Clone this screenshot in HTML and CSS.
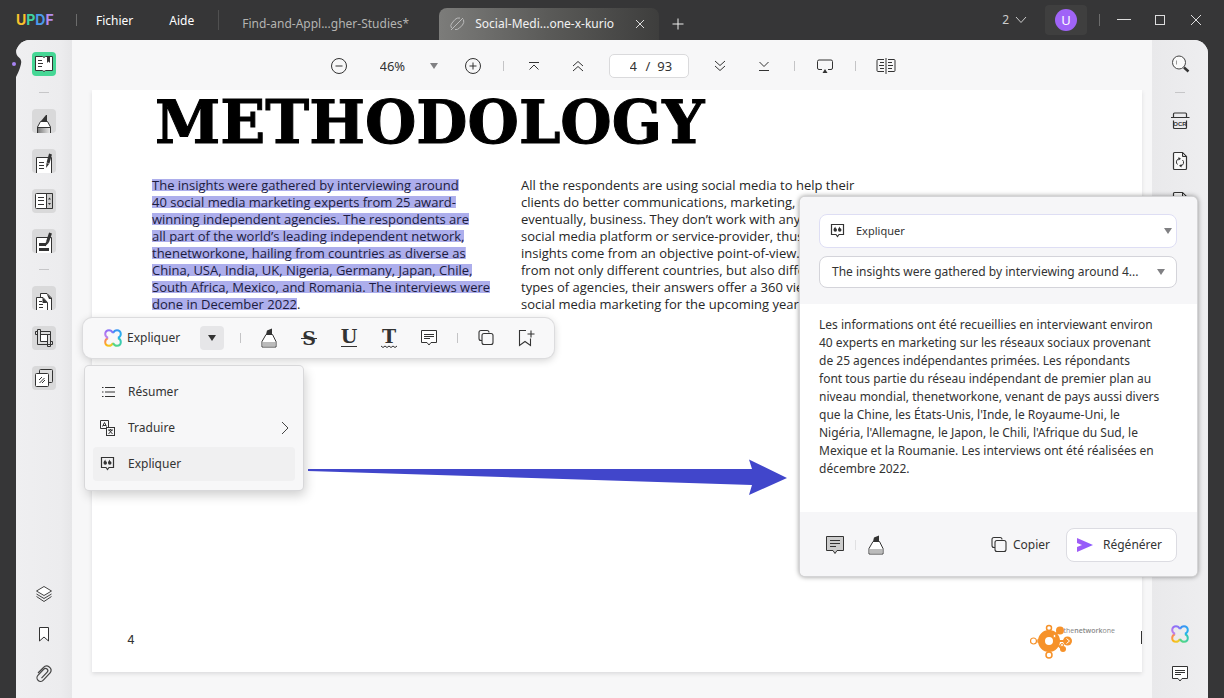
FILE: index.html
```html
<!DOCTYPE html>
<html lang="fr">
<head>
<meta charset="utf-8">
<meta name="viewport" content="width=device-width, initial-scale=1">
<title>UPDF</title>
<link rel="stylesheet" href="styles.css">
</head>
<body>
<svg class="sprite" aria-hidden="true">
  <defs>
    <linearGradient id="g-tl" x1="0" y1="1" x2="1" y2="0"><stop offset="0" stop-color="#c98be8"/><stop offset=".5" stop-color="#9a6bf5"/><stop offset="1" stop-color="#7c7cf8"/></linearGradient>
    <linearGradient id="g-tr" x1="0" y1="0" x2="1" y2="1"><stop offset="0" stop-color="#3c8cf5"/><stop offset="1" stop-color="#27b7ee"/></linearGradient>
    <linearGradient id="g-br" x1="1" y1="0" x2="0" y2="1"><stop offset="0" stop-color="#2cc6c4"/><stop offset="1" stop-color="#5bd97c"/></linearGradient>
    <linearGradient id="g-bl" x1="1" y1="1" x2="0" y2="0"><stop offset="0" stop-color="#e6d233"/><stop offset=".5" stop-color="#fdb515"/><stop offset="1" stop-color="#f7777a"/></linearGradient>
    <linearGradient id="g-pen" x1="0" x2="1"><stop offset="0" stop-color="#777"/><stop offset="1" stop-color="#eee"/></linearGradient>
    <linearGradient id="g-send" x1="0" x2="1"><stop offset="0" stop-color="#a05cf5"/><stop offset="1" stop-color="#8b5cff"/></linearGradient>
  </defs>
  <symbol id="clover" viewBox="0 0 18 18"><g fill="none" stroke-width="2"><path stroke="url(#g-bl)" d="M4 9C2 10 1.200 11.500 1.200 13 1.200 15.200 2.800 16.800 5 16.800 6.500 16.800 8 16 9 14"/><path stroke="url(#g-br)" d="M9 14C10 16 11.500 16.800 13 16.800 15.200 16.800 16.800 15.200 16.800 13 16.800 11.500 16 10 14 9"/><path stroke="url(#g-tr)" d="M14 9C16 8 16.800 6.500 16.800 5 16.800 2.800 15.200 1.200 13 1.200 11.500 1.200 10 2 9 4"/><path stroke="url(#g-tl)" d="M9 4C8 2 6.500 1.200 5 1.200 2.800 1.200 1.200 2.800 1.200 5 1.200 6.500 2 8 4 9"/></g></symbol>
  <symbol id="reader" viewBox="0 0 24 24"><path fill="#fff" stroke="#333" d="M3.500 4.500h7l1.500 1 1.500-1h7v14h-7l-1.500 1-1.500-1h-7z"/><path stroke="#333" fill="none" d="M6 8.500h4M6 11.500h5M6 14.500h4"/><path fill="#333" d="M15 5h3v6l-1.500-1.500L15 11z"/></symbol>
  <symbol id="marker-tile" viewBox="0 0 24 24"><path fill="#333" d="M9 12l5-6h1v6z"/><path fill="#fff" stroke="#333" d="M8.500 12.500h7l3 5.500v6.500h-13v-6.500z"/><path fill="url(#g-pen)" stroke="#333" d="M5.500 18.500h13v6h-13z"/></symbol>
  <symbol id="note-tile" viewBox="0 0 24 24"><path fill="#fff" stroke="#333" d="M4.500 25v-16.500h15v16.500"/><path stroke="#333" d="M7 13.500h5M7 16.500h5M7 19.500h5"/><path stroke="#333" stroke-width="3" d="M18.500 5l-2.500 9"/><path fill="#333" d="M14.500 14l2.800.8-3.300 4.200z"/></symbol>
  <symbol id="form-tile" viewBox="0 0 24 24"><rect x="3.500" y="4.500" width="17" height="15" rx="1" fill="#fff" stroke="#333"/><path fill="#ccc" stroke="#333" d="M14.500 4.500h6v15h-6z"/><path stroke="#333" d="M6 8.500h6M6 11.500h6M6 15.500h6"/><path fill="#333" d="M16 10.500l1.500-2 1.500 2zM16 14l1.500 2 1.500-2z"/></symbol>
  <symbol id="redact-tile" viewBox="0 0 24 24"><path fill="#fff" stroke="#333" d="M4.500 25v-16.500h15v16.500"/><path stroke="#333" stroke-width="3" d="M7 15.500h7M7 20.500h10"/><path stroke="#333" stroke-width="3" d="M18.500 4l-3 9"/><path fill="#333" d="M14 12.500l3 1-4 4z"/></symbol>
  <symbol id="pages-tile" viewBox="0 0 24 24"><path fill="#fff" stroke="#333" d="M8.500 25v-17.500h6.500l4.500 4.500v13"/><path fill="#333" d="M14.500 7.500l5.500 5.500h-3z"/><path fill="#fff" stroke="#333" d="M4.500 25v-13.500h6.500l4.500 5v8.500"/><path fill="#333" d="M10.500 11.500l5 5.500h-5z"/><path stroke="#333" d="M7 15.500h3M7 18.500h4M7 21.500h4"/></symbol>
  <symbol id="crop-tile" viewBox="0 0 24 24"><path fill="#fff" d="M8 8h9v9H8z"/><path fill="#ddd" stroke="#333" d="M3.500 5.500h15v9h-3v-6h-12zM5.500 3.500h3v12h12v3h-15zM15.500 8.500h3v12h-3z"/><path fill="#ddd" d="M6 4h2v14h-2zM16 9h2v7h-2z"/></symbol>
  <symbol id="stack-tile" viewBox="0 0 24 24"><rect x="7.500" y="3.500" width="13" height="13" rx="1" fill="#ddd" stroke="#333"/><rect x="3.500" y="7.500" width="13" height="13" rx="1" fill="#fff" stroke="#333"/><path stroke="#333" fill="none" d="M7 14l3-3M10 17l3-3M7.500 17l5-5"/></symbol>
  <symbol id="layers" viewBox="0 0 24 24"><path fill="#fff" stroke="#444" d="M12 4.500l7.500 4.500-7.500 4.500-7.500-4.500z"/><path fill="none" stroke="#444" d="M4.500 12l7.500 4.500 7.500-4.500M4.500 14.500l7.500 5 7.500-5"/></symbol>
  <symbol id="bookmark" viewBox="0 0 24 24"><path fill="#fff" stroke="#333" d="M7.500 5.500h9v13.500l-4.500-4-4.500 4z"/></symbol>
  <symbol id="clip" viewBox="0 0 24 24"><path fill="none" stroke="#444" stroke-width="1.200" d="M6 11l5.500-5.500a4.300 4.300 0 0 1 6.800 5.200l-7 7.500a3.600 3.600 0 0 1-5.400-4.800l6-6.200a2.200 2.200 0 0 1 3.300 3l-5.700 6"/></symbol>
  <symbol id="search" viewBox="0 0 24 24"><circle cx="11" cy="10.500" r="6.500" fill="#fafafa" stroke="#444"/><path fill="none" stroke="#999" d="M8.500 8.500v4"/><path stroke="#333" stroke-width="2.400" d="M16 15.500l4.500 4"/></symbol>
  <symbol id="convert" viewBox="0 0 24 24"><path fill="#f8f8f8" stroke="#333" stroke-width="1.200" d="M14.500 3.500H6.500q-1 0-1 1v15q0 1 1 1h11q1 0 1-1V7.500z"/><path fill="#ccc" stroke="#333" d="M14.500 3.500v4h4z"/><path fill="none" stroke="#333" d="M9.500 15.500a3.400 3.400 0 0 1 1.500-5.800M14.500 11a3.400 3.400 0 0 1-1.500 5.800"/><path fill="#333" d="M10.500 8l2.500 1.700-2.500 1.800zM13.500 15l-2.500 1.700 2.500 1.800z"/></symbol>
  <symbol id="comment" viewBox="0 0 24 24"><path class="fillable" stroke="#333" d="M4.500 4.500h15v12h-5.500l-2 2.500-2-2.500h-5.500z"/><path stroke="#333" d="M7 8.500h10M7 10.500h10M7 12.500h6"/></symbol>
  <symbol id="comment-large" viewBox="0 0 24 24"><path fill="#ccc" stroke="#333" d="M3.500 3.500h17v14h-6.500l-2 3-2-3h-6.500z"/><path stroke="#333" d="M7 7.500h10M7 10.500h10M7 13.500h6"/></symbol>
  <symbol id="marker" viewBox="0 0 24 24"><path fill="#333" d="M9 8.500l1-4 5-2v6z"/><path fill="#fff" stroke="#333" d="M9 8.500h6.500l3.500 7v5.500h-14v-5.500z"/><path fill="#bbb" d="M5.500 16h13v4.500h-13z"/></symbol>
  <symbol id="copy" viewBox="0 0 24 24"><path fill="none" stroke="#333" stroke-width="1.100" d="M8 14.500H7q-2 0-2-2v-6q0-2 2-2h6q2 0 2 2"/><rect x="8" y="7.500" width="11" height="11" rx="2" fill="none" stroke="#333" stroke-width="1.100"/></symbol>
  <symbol id="bookmark-add" viewBox="0 0 24 24"><path fill="none" stroke="#333" stroke-width="1.100" d="M12 4.500H5.500v15l5.500-4 5.500 4v-7M17 4.500v7M13.500 8h7"/></symbol>
  <symbol id="quote" viewBox="0 0 24 24"><path fill="none" stroke="#333" stroke-width="1.200" d="M5.500 5.500h12v10h-4.500l-1.500 2-1.500-2h-4.500z"/><path fill="#333" d="M7.500 10.500q0-1 2-3v1.500q1.500.5 1.500 2a1.700 1.700 0 0 1-3.500 0zM12 10.500q0-1 2-3v1.500q1.500.5 1.500 2a1.700 1.700 0 0 1-3.500 0z"/></symbol>
  <symbol id="list" viewBox="0 0 24 24"><path stroke="#333" d="M9 7.500h10M9 12h10M9 16.500h10"/><path stroke="#333" d="M6 7.500h1.500M6 12h1.500M6 16.500h1.500"/></symbol>
  <symbol id="translate" viewBox="0 0 24 24"><path fill="none" stroke="#333" d="M10.500 12.500h-6v-8h8v7"/><rect x="10.500" y="11.500" width="8" height="8" fill="none" stroke="#333"/><path fill="none" stroke="#333" d="M6.500 10.500l2-4 2 4M7 9.500h3M12 14h5M14.500 13v1M12.500 18l3.500-4M13 14l3.500 4"/></symbol>
  <symbol id="caret" viewBox="0 0 8 6"><path fill="currentColor" d="M0 0h8L4 6z"/></symbol>
</svg>

<header class="titlebar">
  <strong class="brand"><span class="u">U</span><span class="p">P</span><span class="d">D</span><span class="f">F</span></strong>
  <span class="bar"></span>
  <nav class="menubar"><button>Fichier</button><button>Aide</button></nav>
  <span class="bar bar-tall"></span>
  <div class="tabs">
    <button class="tab">Find-and-Appl...gher-Studies*</button>
    <div class="tab tab-active">
      <svg width="16" height="14" viewBox="0 0 16 14" fill="none" stroke="#bbb"><path d="M2.500 11a4 4 0 0 1 .5-5l3-3.500q2-2 5-1.500M6 12.500q2.500.5 4.500-1.500l3-3q2-2.500 1-5.500M2 13L14 1"/></svg>
      <span class="tab-name">Social-Medi...one-x-kurio</span>
      <button aria-label="Fermer l'onglet"><svg width="10" height="10" viewBox="0 0 10 10" stroke="#ddd"><path d="M1 1l8 8M9 1l-8 8"/></svg></button>
    </div>
    <button class="new-tab" aria-label="Nouvel onglet"><svg width="12" height="12" viewBox="0 0 12 12" stroke="#eee"><path d="M6 .5v11M.5 6h11"/></svg></button>
  </div>
  <div class="window-tools">
    <button class="count">2 <svg width="12" height="8" viewBox="0 0 12 8" fill="none" stroke="#ccc"><path d="M1 1l5 5.500L11 1"/></svg></button>
    <button class="account"><span class="avatar">U</span></button>
    <span class="bar"></span>
    <button class="win" aria-label="Réduire"><svg width="14" height="14" viewBox="0 0 14 14" stroke="#ddd"><path d="M0 6.500h14"/></svg></button>
    <button class="win" aria-label="Agrandir"><svg width="12" height="12" viewBox="0 0 12 12" fill="none" stroke="#ddd"><rect x="1.500" y="1.500" width="9" height="9"/></svg></button>
    <button class="win" aria-label="Fermer"><svg width="12" height="12" viewBox="0 0 12 12" stroke="#ddd"><path d="M1 1l10 10M11 1L1 11"/></svg></button>
  </div>
</header>

<div class="workspace">
  <aside class="rail rail-left">
    <svg class="notch" width="10" height="26" viewBox="0 0 10 26"><path fill="#363637" d="M0 0h4q0 4 3 6.500t2 6.500-2 6.500-3 6.500H0z"/><circle cx="2" cy="13" r="2" fill="#a884f3"/></svg>
    <button class="tool tool-on" aria-label="Lecteur"><svg><use href="#reader"/></svg></button>
    <hr>
    <button class="tool tile" aria-label="Commenter"><svg><use href="#marker-tile"/></svg></button>
    <button class="tool tile" aria-label="Modifier"><svg><use href="#note-tile"/></svg></button>
    <button class="tool tile" aria-label="Formulaire"><svg><use href="#form-tile"/></svg></button>
    <button class="tool tile" aria-label="Caviarder"><svg><use href="#redact-tile"/></svg></button>
    <hr>
    <button class="tool tile" aria-label="Organiser les pages"><svg><use href="#pages-tile"/></svg></button>
    <button class="tool tile" aria-label="Recadrer"><svg><use href="#crop-tile"/></svg></button>
    <button class="tool tile" aria-label="Filigrane"><svg><use href="#stack-tile"/></svg></button>
    <button class="tool push" aria-label="Calques"><svg><use href="#layers"/></svg></button>
    <button class="tool" aria-label="Signets"><svg><use href="#bookmark"/></svg></button>
    <button class="tool" aria-label="Pièces jointes"><svg><use href="#clip"/></svg></button>
  </aside>

  <main class="viewer">
    <div class="toolbar">
      <button class="tbtn" aria-label="Zoom arrière"><svg width="18" height="18" viewBox="0 0 18 18" fill="none" stroke="#333"><circle cx="9" cy="9" r="7.500"/><path d="M5.500 9h7"/></svg></button>
      <label class="zoom"><select aria-label="Zoom"><option>46%</option></select><svg class="caret" width="8" height="6"><use href="#caret"/></svg></label>
      <button class="tbtn" aria-label="Zoom avant"><svg width="18" height="18" viewBox="0 0 18 18" fill="none" stroke="#333"><circle cx="9" cy="9" r="7.500"/><path d="M5.500 9h7M9 5.500v7"/></svg></button>
      <span class="sep"></span>
      <button class="tbtn" aria-label="Première page"><svg width="12" height="12" viewBox="0 0 12 12" fill="none" stroke="#333"><path d="M1 2.500h10M1.500 9.500L6 5l4.500 4.500"/></svg></button>
      <button class="tbtn" aria-label="Page précédente"><svg width="12" height="12" viewBox="0 0 12 12" fill="none" stroke="#333"><path d="M1 6l5-4.500L11 6M1 11l5-4.500 5 4.500"/></svg></button>
      <label class="pager"><input aria-label="Page" value="4"><span>/</span><span>93</span></label>
      <button class="tbtn" aria-label="Page suivante"><svg width="12" height="12" viewBox="0 0 12 12" fill="none" stroke="#333"><path d="M1 1l5 4.500L11 1M1 6l5 4.500L11 6"/></svg></button>
      <button class="tbtn" aria-label="Dernière page"><svg width="12" height="12" viewBox="0 0 12 12" fill="none" stroke="#333"><path d="M1 10.500h10M1.500 2L6 6.500 10.500 2"/></svg></button>
      <span class="sep"></span>
      <button class="tbtn" aria-label="Diaporama"><svg width="18" height="14" viewBox="0 0 18 14"><path fill="none" stroke="#333" d="M6 10.500H3q-1.500 0-1.500-1.500V2.500Q1.500 1 3 1h12q1.500 0 1.500 1.500V9q0 1.500-1.500 1.500h-3"/><path fill="#333" d="M6.500 14L9 10l2.500 4z"/></svg></button>
      <span class="sep"></span>
      <button class="tbtn" aria-label="Affichage"><svg width="20" height="18" viewBox="0 0 20 18" fill="none" stroke="#333"><path d="M8 2.500H2q-1 0-1 1v10q0 1 1 1h6M12 2.500h6q1 0 1 1v10q0 1-1 1h-6M10 1v16M4 5.500h4M3 8.500h5M4 11.500h4M12 5.500h4M12 8.500h5M12 11.500h4"/></svg></button>
    </div>

    <article class="page">
      <h1>METHODOLOGY</h1>
      <div class="columns">
        <p><mark>The insights were gathered by interviewing around</mark><br><mark>40 social media marketing experts from 25 award-</mark><br><mark>winning independent agencies. The respondents are</mark><br><mark>all part of the world’s leading independent network,</mark><br><mark>thenetworkone, hailing from countries as diverse as</mark><br><mark>China, USA, India, UK, Nigeria, Germany, Japan, Chile,</mark><br><mark>South Africa, Mexico, and Romania. The interviews were</mark><br><mark class="end">done in December 2022</mark>.</p>
        <p>All the respondents are using social media to help their<br>clients do better communications, marketing, and<br>eventually, business. They don’t work with any particular<br>social media platform or service-provider, thus their<br>insights come from an objective point-of-view. Coming<br>from not only different countries, but also different<br>types of agencies, their answers offer a 360 view on<br>social media marketing for the upcoming year.</p>
      </div>
      <footer class="page-foot">
        <span>4</span>
        <div class="sponsor">
          <svg width="44" height="36" viewBox="0 0 44 36" fill="none" stroke="#f6922a"><circle cx="19" cy="17" r="7.500" stroke-width="7"/><circle cx="19" cy="4" r="2.500" stroke-width="1.500"/><circle cx="19" cy="31" r="3" stroke-width="1.500"/><circle cx="3.500" cy="17" r="3" stroke-width="1.200"/><circle cx="8.500" cy="17" r="1.500"/><circle cx="30" cy="6.500" r="4" fill="#f6922a" stroke="none"/><path d="M24 12l4-4M26 17h8M27 20l5 5" stroke-width="2"/><circle cx="37.500" cy="17" r="4.500" fill="#f6922a" stroke="none"/><path stroke="#fff" d="M36.500 14.500l3 2.500-3 2.500"/><circle cx="33" cy="25" r="3" fill="#f6922a" stroke="none"/><circle cx="24.500" cy="12" r="1.500" fill="#fff"/><circle cx="32" cy="21" r="1.500" fill="#fff"/></svg>
          <small>the<b>network</b>one</small>
        </div>
      </footer>
      <span class="caret-mark"></span>

      <div class="popbar">
        <button class="ai"><svg width="18" height="18"><use href="#clover"/></svg>Expliquer</button>
        <button class="drop" aria-label="Plus d'actions"><svg width="8" height="6"><use href="#caret"/></svg></button>
        <span class="sep"></span>
        <button class="pbtn" aria-label="Surligner"><svg><use href="#marker"/></svg></button>
        <button class="pbtn" aria-label="Barrer"><svg viewBox="0 0 24 24"><text x="12" y="19" class="glyph">S</text><path stroke="#333" d="M4 12.500h16"/></svg></button>
        <button class="pbtn" aria-label="Souligner"><svg viewBox="0 0 24 24"><text x="12" y="17" class="glyph">U</text><path stroke="#333" d="M4 20.500h16"/></svg></button>
        <button class="pbtn" aria-label="Souligner en vague"><svg viewBox="0 0 24 24"><text x="12" y="17" class="glyph">T</text><path stroke="#333" fill="none" d="M4 20l2 1.500 2-1.500 2 1.500 2-1.500 2 1.500 2-1.500 2 1.500 2-1.500"/></svg></button>
        <button class="pbtn" aria-label="Commentaire"><svg><use href="#comment"/></svg></button>
        <span class="sep"></span>
        <button class="pbtn" aria-label="Copier"><svg><use href="#copy"/></svg></button>
        <button class="pbtn" aria-label="Ajouter un signet"><svg><use href="#bookmark-add"/></svg></button>
      </div>

      <div class="popmenu">
        <button><svg><use href="#list"/></svg>Résumer</button>
        <button><svg><use href="#translate"/></svg>Traduire<svg class="more" viewBox="0 0 8 14" fill="none" stroke="#444"><path d="M1 1l6 6-6 6"/></svg></button>
        <button class="current"><svg><use href="#quote"/></svg>Expliquer</button>
      </div>

      <svg class="arrow" width="480" height="38" viewBox="0 0 480 38"><path fill="#4146cb" d="M0 10L444 10 441 0.500 479 19 441 36l3-10L0 12z"/></svg>
    </article>
  </main>

  <aside class="rail rail-right">
    <button class="tool" aria-label="Rechercher"><svg><use href="#search"/></svg></button>
    <hr>
    <button class="tool" aria-label="OCR"><svg viewBox="0 0 24 24"><path fill="none" stroke="#333" stroke-width="1.200" d="M5.500 8v-3q0-1 1-1h11q1 0 1 1v3M3 8.500h18.500M5.500 11.500v7q0 1 1 1h11q1 0 1-1v-7"/><text x="12" y="17" class="ocr-text">OCR</text></svg></button>
    <button class="tool" aria-label="Convertir"><svg><use href="#convert"/></svg></button>
    <button class="tool" aria-label="Protéger"><svg><use href="#convert"/></svg></button>
    <button class="tool push" aria-label="UPDF AI"><svg class="small"><use href="#clover"/></svg></button>
    <button class="tool" aria-label="Commentaires"><svg><use href="#comment"/></svg></button>
  </aside>

  <section class="panel">
    <div class="panel-head">
      <label class="field field-action"><svg width="24" height="24"><use href="#quote"/></svg><select aria-label="Action"><option>Expliquer</option></select><svg class="caret" width="8" height="6"><use href="#caret"/></svg></label>
      <button class="field"><span>The insights were gathered by interviewing around 4...</span><svg class="caret" width="8" height="6"><use href="#caret"/></svg></button>
    </div>
    <p class="panel-body">Les informations ont été recueillies en interviewant environ<br>40 experts en marketing sur les réseaux sociaux provenant<br>de 25 agences indépendantes primées. Les répondants<br>font tous partie du réseau indépendant de premier plan au<br>niveau mondial, thenetworkone, venant de pays aussi divers<br>que la Chine, les États-Unis, l'Inde, le Royaume-Uni, le<br>Nigéria, l'Allemagne, le Japon, le Chili, l'Afrique du Sud, le<br>Mexique et la Roumanie. Les interviews ont été réalisées en<br>décembre 2022.</p>
    <div class="panel-foot">
      <button class="pbtn" aria-label="Ajouter au commentaire"><svg><use href="#comment-large"/></svg></button>
      <span class="sep"></span>
      <button class="pbtn" aria-label="Surligner"><svg><use href="#marker"/></svg></button>
      <button class="copy"><svg width="24" height="24"><use href="#copy"/></svg>Copier</button>
      <button class="regen"><svg width="18" height="14" viewBox="0 0 18 14"><path fill="url(#g-send)" d="M1 0l16 7-16 7V9l5-2-5-2z"/></svg>Régénérer</button>
    </div>
  </section>
</div>
</body>
</html>
```
FILE: styles.css
```css
* { box-sizing: border-box; }

body {
  margin: 0;
  min-height: 100vh;
  display: flex;
  flex-direction: column;
  background: #363637;
  color: #333;
  font: 12px/18px "Noto Sans", "Open Sans", sans-serif;
}

button, select, input {
  font: inherit;
  color: inherit;
  background: none;
  border: 0;
  padding: 0;
  margin: 0;
}

button { white-space: nowrap; }
select { appearance: none; }
svg { display: block; flex: none; }
hr { width: 10px; height: 1px; margin: 0; border: 0; background: #c6c6c8; }

.sprite { position: absolute; width: 0; height: 0; }

/* Title bar */
.titlebar {
  display: flex;
  align-items: center;
  height: 40px;
  padding: 0 16px;
  color: #fff;
}

.brand { font: 700 14px/18px Inter, sans-serif; width: 60px; }
.u { color: #f8c22c; }
.p { color: #3fd3a0; }
.d { color: #4b9bea; }
.f { color: #b58cf0; }

.bar { width: 1px; height: 12px; background: #6c6c6c; }
.bar-tall { height: 20px; background: #505050; }

.menubar { display: flex; gap: 36px; margin: 2px 24px 0 19px; }

.tabs { display: flex; align-self: flex-end; height: 32px; margin-left: 23px; }
.tab { width: 173px; color: #b4b4b2; text-align: left; }
.tab-active {
  display: flex;
  align-items: center;
  gap: 10px;
  width: 220px;
  padding: 0 14px 0 10px;
  margin: 0 13px 0 24px;
  color: #f2f2f2;
  white-space: nowrap;
  border-radius: 8px 8px 0 0;
  background: linear-gradient(90deg, #7c7c7a, #5a5a58 50%, #3e3e3d);
}
.tab-name { flex: 1; }

.window-tools { display: flex; align-items: center; margin-left: auto; }
.count { display: flex; align-items: center; gap: 6px; color: #ccc; }
.account {
  width: 42px;
  height: 30px;
  margin: 0 12px 0 18px;
  display: grid;
  place-items: center;
  border-radius: 4px;
  background: #3f3f3f;
}
.avatar {
  width: 22px;
  height: 22px;
  border-radius: 50%;
  background: #a064f7;
  color: #fff;
  font-size: 13px;
  line-height: 22px;
}
.win { width: 36px; height: 30px; display: grid; place-items: center; }
.window-tools .bar { margin-right: 6px; }
.window-tools .win:last-child { margin-right: -6px; }

/* Workspace */
.workspace {
  position: relative;
  flex: 1;
  display: flex;
  margin: 0 16px;
  border-radius: 14px 14px 0 0;
  background: #f7f7f8;
}

.rail {
  position: relative;
  width: 56px;
  padding: 12px 0;
  display: flex;
  flex-direction: column;
  align-items: center;
  gap: 16px;
}
.rail-left { border-top-left-radius: 14px; background: linear-gradient(90deg, #efeff1, #ececee 80%, #e6e6e8); }
.rail-right { border-top-right-radius: 14px; background: linear-gradient(90deg, #e9e9eb, #eeeef0); }
.tool { width: 24px; height: 24px; border-radius: 4px; display: grid; place-items: center; }
.tool svg { width: 24px; height: 24px; }
.tool .small { width: 18px; height: 18px; }
.tile { background: #d9d9da; overflow: hidden; }
.tool-on { background: #45d795; }
.push { margin-top: auto; }
.notch { position: absolute; left: -4px; top: 11px; }
.ocr-text { font: 700 6px "Liberation Sans", sans-serif; text-anchor: middle; fill: #333; }
.fillable { fill: #fff; }

.viewer { flex: 1; display: flex; flex-direction: column; min-width: 0; }

.toolbar {
  height: 50px;
  padding-top: 2px;
  display: flex;
  align-items: center;
  justify-content: center;
  gap: 18px;
}
.tbtn { width: 26px; height: 26px; display: grid; place-items: center; }
.sep { width: 1px; height: 10px; margin: 0 -1px; background: #c4c4c6; }
.zoom { position: relative; width: 72px; font-size: 13px; }
.zoom select { width: 100%; padding-left: 10px; }
.caret { color: #808083; }
.zoom .caret { position: absolute; right: 4px; top: 6px; }
.pager {
  display: flex;
  align-items: center;
  gap: 7px;
  width: 80px;
  height: 24px;
  padding: 0 12px 0 20px;
  font-size: 13px;
  border: 1px solid #dadadc;
  border-radius: 5px;
  background: #fff;
}
.pager input { width: 9px; outline: 0; }

/* Document page */
.page {
  position: relative;
  flex: 1;
  display: flex;
  flex-direction: column;
  margin: 0 10px 26px 20px;
  background: #fff;
  box-shadow: 0 2px 4px #dcdcde;
  clip-path: inset(0 -10px -10px -20px);
}
.page h1 {
  margin: 0 0 0 63px;
  height: 87px;
  font: 700 59px/66px "DejaVu Serif", serif;
  color: #000;
  -webkit-text-stroke: 1px #000;
}
.columns {
  display: grid;
  grid-template-columns: 369px 1fr;
  padding-left: 60px;
  font: 13px/17px "Open Sans", sans-serif;
  color: #262626;
  white-space: nowrap;
}
.columns p { margin: 0; }
mark {
  color: #1c1c40;
  background: linear-gradient(#adaeec, #adaeec) no-repeat center / 100% 12px;
}
.page-foot {
  margin-top: auto;
  padding: 0 27px 12px 35px;
  display: flex;
  align-items: center;
  justify-content: space-between;
  font: 12px/18px Inter, sans-serif;
}
.page-foot > span { padding-bottom: 4px; }
.sponsor { display: flex; }
.sponsor small { margin: 2px 0 0 -10px; font: 7px/9px "Open Sans", sans-serif; color: #888; }
.sponsor b { font-weight: 600; }
.caret-mark { position: absolute; right: 0; bottom: 28px; width: 1px; height: 13px; background: #333; }

/* Selection toolbar and its menu */
.popbar {
  position: absolute;
  left: -9px;
  top: 228px;
  width: 471px;
  height: 40px;
  padding: 0 15px 0 21px;
  display: flex;
  align-items: center;
  gap: 16px;
  border-radius: 9px;
  background: #f8f8f9;
  box-shadow: 0 0 0 1px #dcdcde, 0 2px 8px #00000033;
}
.popbar .sep { margin: 0; }
.ai { display: flex; align-items: center; gap: 5px; width: 80px; }
.drop {
  width: 24px;
  height: 24px;
  display: grid;
  place-items: center;
  border-radius: 4px;
  background: #e6e6e8;
}
.drop .caret, .drop svg { color: #333; }
.pbtn { width: 24px; height: 24px; }
.pbtn svg { width: 24px; height: 24px; }
.glyph { font: 700 19px "DejaVu Serif", serif; text-anchor: middle; fill: #333; }

.popmenu {
  position: absolute;
  left: -7px;
  top: 276px;
  width: 218px;
  padding: 9px 8px;
  border-radius: 4px;
  background: #f7f7f8;
  box-shadow: 0 0 0 1px #d8d8da, 2px 5px 12px #00000033;
}
.popmenu button {
  display: flex;
  align-items: center;
  gap: 8px;
  width: 100%;
  height: 34px;
  margin-bottom: 2px;
  padding: 0 6px 0 3px;
  border-radius: 4px;
}
.popmenu button:last-child { margin-bottom: 0; }
.popmenu svg { width: 24px; height: 24px; }
.popmenu .more { width: 8px; height: 14px; margin-left: auto; }
.popmenu .current { background: #f0f0f1; }

.arrow { position: absolute; left: 216px; top: 369px; }

/* AI panel */
.panel {
  position: absolute;
  right: 11px;
  top: 157px;
  width: 397px;
  height: 379px;
  display: flex;
  flex-direction: column;
  border-radius: 5px;
  background: #fff;
  box-shadow: 0 0 0 1px #d4d4d6, 0 0 5px 1px #00000066;
  overflow: hidden;
}
.panel-head {
  display: flex;
  flex-direction: column;
  gap: 8px;
  padding: 17px 20px 16px 19px;
  background: #f6f6f8;
}
.field {
  display: flex;
  align-items: center;
  justify-content: space-between;
  height: 32px;
  padding: 0 11px 0 12px;
  border: 1px solid #d4d4da;
  border-radius: 8px;
  background: #fff;
}
.field-action { height: 34px; padding: 0 4px 0 6px; border-color: #dedef4; font-size: 11px; }
.field-action select { flex: 1; margin-left: 6px; }
.panel-body { flex: 1; margin: 0; padding: 12px 19px; white-space: nowrap; }
.panel-foot {
  display: flex;
  align-items: center;
  height: 64px;
  padding: 2px 20px 0 23px;
  background: #f6f6f8;
}
.panel-foot .sep { margin: 0 8px; background: #e0e0e2; }
.copy { display: flex; align-items: center; gap: 2px; width: 65px; margin-left: auto; }
.regen {
  display: flex;
  align-items: center;
  gap: 9px;
  height: 34px;
  width: 111px;
  margin-left: 14px;
  padding: 0 12px 0 9px;
  border: 1px solid #dcdce2;
  border-radius: 8px;
  background: #fff;
}
```
